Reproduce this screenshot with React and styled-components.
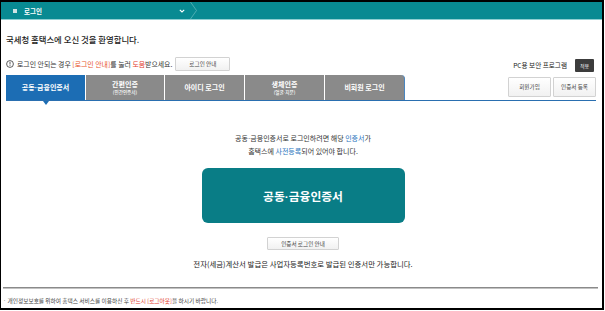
import React from 'react'
import styled, { createGlobalStyle } from 'styled-components'

const GlobalStyle = createGlobalStyle`
  body {
    margin: 0;
    background: #fff;
    font-family: "Noto Sans CJK KR", "Noto Sans", sans-serif;
    color: #222;
  }
`

const Frame = styled.div`
  box-sizing: border-box;
  width: 604px;
  height: 310px;
  border: 2px solid #000;
  border-left-width: 1px;
  display: flex;
  flex-direction: column;
  overflow: hidden;
`

const TopBar = styled.div`
  height: 17px;
  background: #088a92;
  border-bottom: 1px solid #8fcfd2;
  display: flex;
  align-items: stretch;
`

const Menu = styled.div`
  width: 189px;
  display: flex;
  align-items: center;
  padding-left: 12px;
  box-sizing: border-box;
  color: #fff;
  font-size: 6.5px;
  font-weight: 700;
`

const Square = styled.span`
  width: 4px;
  height: 4px;
  background: #cfe3e4;
  margin-right: 7px;
`

const Chevron = styled.span`
  margin-left: auto;
  margin-right: 5px;
  display: flex;
`

const Content = styled.div`
  flex: 1;
  display: flex;
  flex-direction: column;
  padding: 0 4px 0 5px;
`

const Title = styled.h1`
  margin: 13px 0 0;
  font-size: 8.4px;
  line-height: 12px;
  font-weight: 500;
  color: #1a1a1a;
`

const InfoRow = styled.div`
  margin-top: 11px;
  display: flex;
  align-items: center;
  justify-content: space-between;
  height: 15px;
`

const Info = styled.div`
  display: flex;
  align-items: center;
  font-size: 6.9px;
  color: #333;
`

const Red = styled.span`
  color: ${p => p.$tone || '#e23b2e'};
`

const Blue = styled.span`
  color: #1f73bd;
`

const Dot = styled.span`
  font-family: "Liberation Sans", sans-serif;
`

const SmallButton = styled.button`
  box-sizing: border-box;
  height: ${p => p.$h || 14}px;
  width: ${p => p.$w}px;
  margin-left: ${p => p.$ml || 0}px;
  padding: 0;
  border: 1px solid #d2d2d2;
  border-radius: 1px;
  background: linear-gradient(#fff, #f1f1f1);
  font-family: inherit;
  font-size: 5.6px;
  color: #444;
`

const Security = styled.div`
  display: flex;
  align-items: center;
  font-size: 6.6px;
  color: #222;
  padding-top: 3px;
  margin-right: 4px;
`

const DarkButton = styled.span`
  margin-left: 8px;
  width: 19px;
  height: 13px;
  background: #3c3c3c;
  color: #fff;
  font-size: 5px;
  display: flex;
  align-items: center;
  justify-content: center;
  border-radius: 1px;
`

const TabBar = styled.div`
  margin-top: 4px;
  height: 25px;
  display: flex;
  align-items: stretch;
  border-bottom: 1px solid #2a6fb0;
  margin-right: 2px;
`

const Tab = styled.div`
  position: relative;
  width: ${p => p.$w || 80}px;
  box-sizing: border-box;
  display: flex;
  flex-direction: column;
  align-items: center;
  justify-content: center;
  background: ${p => (p.$active ? '#1c6db4' : '#8a8a8a')};
  border-right: 1px solid ${p => (p.$last ? '#4a86c0' : '#fff')};
  border-top-right-radius: ${p => (p.$last ? 4 : 0)}px;
  color: #fff;
  font-size: 7px;
  font-weight: 700;
  line-height: 9px;
`

const Sub = styled.span`
  font-size: 4.6px;
  line-height: 6px;
  font-weight: 500;
`

const Pointer = styled.span`
  position: absolute;
  left: 37px;
  bottom: -5px;
  width: 0;
  height: 0;
  border-left: 3px solid transparent;
  border-right: 3px solid transparent;
  border-top: 4px solid #1c6db4;
`

const TabActions = styled.div`
  margin-left: auto;
  display: flex;
  align-items: flex-start;
  gap: 2px;
  padding-top: 2px;
`

const Center = styled.div`
  display: flex;
  flex-direction: column;
  align-items: center;
  padding-left: 2px;
`

const Notice = styled.p`
  margin: 31px 0 0;
  font-size: 7px;
  line-height: 12px;
  text-align: center;
  color: #333;
`

const BigButton = styled.button`
  margin-top: 11px;
  width: 203px;
  height: 55px;
  border: 0;
  border-radius: 6px;
  background: #097d86;
  color: #fff;
  font-family: inherit;
  font-size: 11.8px;
  font-weight: 700;
`

const Note = styled.p`
  margin: 8px 0 0;
  font-size: 7.4px;
  line-height: 12px;
  color: #222;
`

const Divider = styled.hr`
  margin: 17px 0 0 -3px;
  width: 595px;
  border: 0;
  height: 2px;
  background: linear-gradient(#8a8a8a 50%, #c2c2c2 50%);
`

const Footer = styled.p`
  margin: 7px 0 0 -3px;
  font-size: 5.7px;
  color: #444;
`

function InfoIcon() {
  return (
    <svg width="8" height="8" viewBox="0 0 8 8" style={{ marginRight: 3 }}>
      <circle cx="4" cy="4" r="3.4" fill="none" stroke="#333" strokeWidth="0.8" />
      <rect x="3.6" y="1.9" width="0.8" height="2.6" fill="#333" />
      <rect x="3.6" y="5.1" width="0.8" height="0.8" fill="#333" />
    </svg>
  )
}

export default function App() {
  return (
    <>
      <GlobalStyle />
      <Frame>
        <TopBar>
          <Menu>
            <Square />
            로그인
            <Chevron>
              <svg width="6" height="4" viewBox="0 0 6 4">
                <polyline points="0.8,0.8 3,3 5.2,0.8" fill="none" stroke="#fff" strokeWidth="1.1" />
              </svg>
            </Chevron>
          </Menu>
          <svg width="8" height="17" viewBox="0 0 8 17">
            <polyline points="0.5,0 6.5,8.5 0.5,17" fill="none" stroke="#5fb6bb" strokeWidth="0.8" />
          </svg>
        </TopBar>
        <Content>
          <Title>국세청 홈택스에 오신 것을 환영합니다.</Title>
          <InfoRow>
            <Info>
              <InfoIcon />
              로그인 안되는 경우&nbsp;<Red $tone="#e8532d">[로그인 안내]</Red>를 눌러&nbsp;<Red>도움</Red>받으세요.
              <SmallButton $w={55} $ml={3}>로그인 안내</SmallButton>
            </Info>
            <Security>
              PC용 보안 프로그램
              <DarkButton>적용</DarkButton>
            </Security>
          </InfoRow>
          <TabBar>
            <Tab $active>
              <span>공동<Dot>·</Dot>금융인증서</span>
              <Pointer />
            </Tab>
            <Tab $w={79}>
              간편인증
              <Sub>(민간인증서)</Sub>
            </Tab>
            <Tab>아이디 로그인</Tab>
            <Tab>
              생체인증
              <Sub>(얼굴<Dot>·</Dot>지문)</Sub>
            </Tab>
            <Tab $last>비회원 로그인</Tab>
            <TabActions>
              <SmallButton $w={43} $h={20}>회원가입</SmallButton>
              <SmallButton $w={43} $h={20}>인증서 등록</SmallButton>
            </TabActions>
          </TabBar>
          <Center>
            <Notice>
              공동<Dot>·</Dot>금융인증서로 로그인하려면 해당 <Blue>인증서</Blue>가
              <br />
              홈택스에 <Blue>사전등록</Blue>되어 있어야 합니다.
            </Notice>
            <BigButton>공동<Dot>·</Dot>금융인증서</BigButton>
            <SmallButton $w={72} $h={13} style={{ marginTop: 14 }}>인증서 로그인 안내</SmallButton>
            <Note>전자(세금)계산서 발급은 사업자등록번호로 발급된 인증서만 가능합니다.</Note>
          </Center>
          <Divider />
          <Footer>
            · 개인정보보호를 위하여 홈택스 서비스를 이용하신 후 <Red>반드시 [로그아웃]</Red>을 하시기 바랍니다.
          </Footer>
        </Content>
      </Frame>
    </>
  )
}
